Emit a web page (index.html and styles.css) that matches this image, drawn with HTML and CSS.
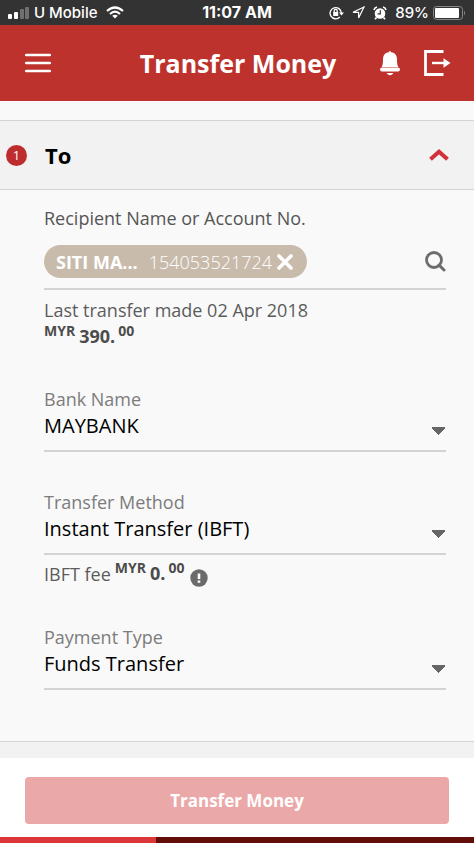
FILE: index.html
```html
<!DOCTYPE html>
<html lang="en">
<head>
<meta charset="utf-8">
<meta name="viewport" content="width=device-width, initial-scale=1">
<title>Transfer Money</title>
<link rel="stylesheet" href="styles.css">
</head>
<body>
<div class="status">
  <div class="status-side">
    <svg width="22" height="12" viewBox="0 0 22 12" fill="#fff"><rect x="0" y="7" width="4" height="5" rx="1"/><rect x="6" y="5" width="4" height="7" rx="1"/><rect x="12" y="2" width="4" height="10" rx="1" opacity=".3"/><rect x="17" y="0" width="4" height="12" rx="1" opacity=".3"/></svg>
    <span class="carrier">U Mobile</span>
    <svg width="18" height="13" viewBox="0 0 18 13" fill="none" stroke="#fff" stroke-width="2.2"><path d="M1 5Q9-2 17 5M4 8Q9 3.400 14 8"/><path d="M9 12.500L6.200 9.700Q9 7.600 11.800 9.700Z" fill="#fff" stroke="none"/></svg>
  </div>
  <span class="time">11:07 AM</span>
  <div class="status-side status-right">
    <svg width="15" height="14" viewBox="0 0 15 14" fill="none" stroke="#fff" stroke-width="1.300"><path d="M12.300 7A5.600 5.600 0 1 0 10.800 11"/><path d="M10 6.500h5l-2.500 3z" fill="#fff" stroke="none"/><rect x="4.200" y="6" width="5" height="4" fill="#fff" stroke="none"/><path d="M5.200 6V4.800a1.500 1.500 0 0 1 3 0V6"/></svg>
    <svg width="13" height="13" viewBox="0 0 13 13" fill="none" stroke="#fff" stroke-width="1.200"><path d="M12 1L1 6.300H6.600V12Z"/></svg>
    <svg width="14" height="14" viewBox="0 0 14 14"><circle cx="7" cy="7.500" r="5.300" fill="#fff"/><path d="M1 4A4 4 0 0 1 4 1M10 1a4 4 0 0 1 3 3M3.500 11.500L2 13.300M10.500 11.500L12 13.300" stroke="#fff" stroke-width="1.700" fill="none"/><path d="M7.300 4.300V7.800H4.500" stroke="#333" stroke-width="1.200" fill="none"/></svg>
    <span class="percent">89%</span>
    <svg width="33" height="14" viewBox="0 0 33 14"><rect x=".5" y=".5" width="29" height="13" rx="3" fill="none" stroke="#888"/><rect x="2" y="2" width="24" height="10" rx="1" fill="#fff"/><path d="M31 4.500q2 2.500 0 5z" fill="#888"/></svg>
  </div>
</div>
<header class="topbar">
  <button class="icon-button" aria-label="Menu"><svg width="26" height="20" viewBox="0 0 26 20" stroke="#fff" stroke-width="2.600" stroke-linecap="round"><path d="M1.200 2H24.800M1.200 10H24.800M1.200 18H24.800"/></svg></button>
  <h1>Transfer Money</h1>
  <div class="actions">
    <button class="icon-button" aria-label="Notifications"><svg width="20" height="26" viewBox="0 0 20 26" fill="#fff"><path d="M9 2.200Q10-.8 11 2.200C15.500 2.700 17 6 17 9.500C17 13.500 17.500 15.500 18.300 17H1.700C2.500 15.500 3 13.500 3 9.500C3 6 4.500 2.700 9 2.200Z"/><rect x="0" y="17.500" width="20" height="4" rx="2"/><path d="M6.500 23H13.500Q10 27.500 6.500 23Z"/></svg></button>
    <button class="icon-button" aria-label="Log out"><svg width="27" height="26" viewBox="0 0 27 26" fill="none" stroke="#fff" stroke-width="2.800"><path d="M19.500 1.500H1.500V24.500H19.500"/><path d="M8 13H21" stroke-width="2.400"/><path d="M19.500 8.300L26.500 13L19.500 17.700Z" fill="#fff" stroke="none"/></svg></button>
  </div>
</header>
<main>
  <section>
    <div class="section-head">
      <span class="step">1</span>
      <h2>To</h2>
      <button class="icon-button" aria-label="Collapse section"><svg width="20" height="12" viewBox="0 0 20 12" fill="none" stroke="#d3313a" stroke-width="4"><path d="M1.500 10.300L10 2.700L18.500 10.300"/></svg></button>
    </div>
    <form class="fields" id="transfer">
      <div class="field recipient-field">
        <label class="recipient-label" for="recipient">Recipient Name or Account No.</label>
        <div class="recipient">
          <div class="chip"><b>SITI MA...</b><span>154053521724</span><button type="button" class="icon-button" aria-label="Remove recipient"><svg width="16" height="16" viewBox="0 0 16 16" stroke="#fff" stroke-width="3.600" stroke-linecap="round"><path d="M2 2L14 14M14 2L2 14"/></svg></button></div>
          <input id="recipient" type="text">
          <button type="button" class="icon-button" aria-label="Search"><svg width="21" height="21" viewBox="0 0 21 21" fill="none" stroke="#6d6d6d"><circle cx="9" cy="9" r="7.500" stroke-width="2.800"/><path d="M14 14L19 19" stroke-width="3" stroke-linecap="round"/></svg></button>
        </div>
        <p class="note">Last transfer made 02 Apr 2018</p>
        <p class="amount"><span class="small">MYR</span><span class="whole">390.</span><span class="small">00</span></p>
      </div>
      <div class="field">
        <label for="bank">Bank Name</label>
        <select id="bank"><option>MAYBANK</option></select>
      </div>
      <div class="field">
        <label for="method">Transfer Method</label>
        <select id="method"><option>Instant Transfer (IBFT)</option></select>
        <div class="fee"><span>IBFT fee</span><p class="amount"><span class="small">MYR</span><span class="whole">0.</span><span class="small">00</span></p>
          <button type="button" class="icon-button info" aria-label="Fee information"><svg width="18" height="18" viewBox="0 0 18 18"><circle cx="9" cy="9" r="8.700" fill="#6b6b6b"/><path d="M9 4.500V10M9 11.500V13.700" stroke="#fff" stroke-width="2.600"/></svg></button></div>
      </div>
      <div class="field">
        <label for="type">Payment Type</label>
        <select id="type"><option>Funds Transfer</option></select>
      </div>
    </form>
  </section>
  <div class="next-section"></div>
</main>
<footer>
  <button class="submit" type="submit" form="transfer">Transfer Money</button>
  <div class="progress"><div class="progress-value"></div></div>
</footer>
</body>
</html>
```
FILE: styles.css
```css
* { box-sizing: border-box; }
body {
  margin: 0;
  min-height: 100vh;
  display: flex;
  flex-direction: column;
  background: #fff;
  color: #4c4c4c;
  font: 18px/24px "Open Sans", sans-serif;
}
h1, h2, p { margin: 0; }
svg { display: block; flex: none; }
button, input, select { font: inherit; }
.icon-button { padding: 0; border: 0; background: none; }

.status {
  display: grid;
  grid-template-columns: 1fr auto 1fr;
  align-items: center;
  height: 25px;
  padding: 0 8px;
  background: #333;
  color: #fff;
  font: 500 15px/25px Inter, sans-serif;
  white-space: nowrap;
}
.status-side { display: flex; align-items: center; gap: 4px; }
.carrier { margin-right: 4px; }
.time { font-size: 16px; font-weight: 700; }
.status-right { justify-content: flex-end; gap: 8px; }
.percent { margin-right: -4px; }

.topbar {
  display: grid;
  grid-template-columns: 1fr auto 1fr;
  align-items: center;
  height: 76px;
  padding: 0 23px 0 25px;
  background: #be322d;
  color: #fff;
}
.topbar > .icon-button { justify-self: start; }
h1 { font-size: 25px; line-height: 36px; font-weight: 700; }
.actions { display: flex; justify-content: flex-end; align-items: center; gap: 24px; }

main { flex: 1; display: flex; flex-direction: column; padding-top: 19px; background: #f9f9f9; }
.section-head {
  display: flex;
  align-items: center;
  height: 70px;
  padding: 0 25px 0 6px;
  border: solid #d4d4d4;
  border-width: 1px 0;
  background: #f2f2f2;
}
.step {
  width: 21px;
  height: 21px;
  border-radius: 50%;
  background: #be2d2d;
  color: #fff;
  font-size: 13px;
  line-height: 21px;
  text-align: center;
}
h2 { flex: 1; margin-left: 18px; color: #000; font-size: 22px; line-height: 30px; }

.fields { padding: 16px 28px 51px 44px; }
.field { display: flex; flex-direction: column; margin-bottom: 38px; color: #5c5c5c; }
.field:last-child { margin-bottom: 0; }
label { color: #7c7c7c; }
.recipient-label { color: #555; }
.recipient {
  display: flex;
  align-items: center;
  justify-content: space-between;
  margin-top: 10px;
  height: 50px;
  padding: 5px 0 10px;
  border-bottom: 2px solid #d3d3d3;
}
.recipient input { flex: 1; min-width: 0; border: 0; background: none; outline: 0; }
.chip {
  display: flex;
  align-items: center;
  height: 33px;
  padding: 0 14px 0 12px;
  border-radius: 17px;
  background: #c9bbab;
  color: #fff;
}
.chip span { margin: 0 5px 0 11px; font-weight: 300; }
.note { margin-top: 8px; }
.amount { display: flex; align-items: flex-start; color: #4c4c4c; font-weight: 700; }
.small { font-size: 14px; line-height: 18px; }
.whole { margin: 2px 3px 0 4px; }
.recipient-field { margin-bottom: 39px; }

select {
  appearance: none;
  height: 41px;
  padding: 0 0 9px;
  border: 0;
  border-bottom: 2px solid #d3d3d3;
  border-radius: 0;
  background: conic-gradient(from -43deg at 50% 100%, #666 86deg, transparent 0) right 16px / 15px 8px no-repeat;
  color: #000;
  font-size: 20px;
  line-height: 30px;
}
.fee { display: flex; align-items: flex-start; height: 32px; padding-top: 4px; }
.fee > span { padding-top: 3px; }
.fee .amount { margin-left: 4px; }
.info { margin: 10px 0 0 6px; }

.next-section { height: 17px; border-top: 1px solid #d4d4d4; background: #f2f2f2; }
footer { display: flex; flex-direction: column; }
.submit {
  margin: 19px 25px 13px;
  height: 47px;
  border: 0;
  border-radius: 4px;
  background: #eba8a8;
  color: #fff;
  font-size: 17px;
  font-weight: 700;
}
.progress { height: 6px; background: #630d0a; }
.progress-value { width: 33%; height: 100%; background: #dc3639; }
```
